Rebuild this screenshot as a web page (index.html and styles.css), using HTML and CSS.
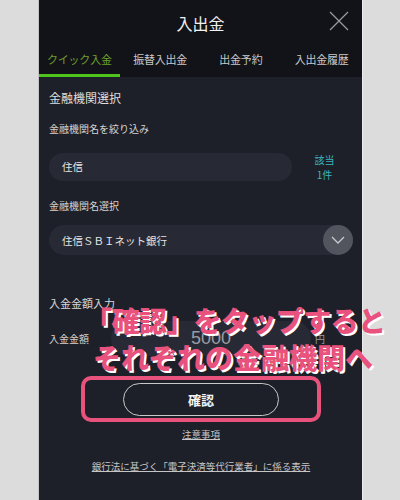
FILE: index.html
```html
<!DOCTYPE html>
<html lang="ja">

<head>
    <meta charset="UTF-8">
    <meta name="viewport" content="width=device-width, initial-scale=1.0">
    <title>入出金</title>
    <link rel="stylesheet" href="styles.css">
</head>

<body>
    <div class="phone">
        <header class="header">
            <div class="title-row">
                <h1 class="title">入出金</h1>
                <svg class="close" width="20" height="20" viewBox="0 0 20 20">
                    <path d="M1 1 L19 19 M19 1 L1 19" stroke="#9a9ca3" stroke-width="1.2" fill="none" />
                </svg>
            </div>
            <nav class="tabs">
                <div class="tab active">クイック入金</div>
                <div class="tab">振替入出金</div>
                <div class="tab">出金予約</div>
                <div class="tab">入出金履歴</div>
            </nav>
        </header>

        <main class="content">
            <h2 class="section-title">金融機関選択</h2>

            <p class="label">金融機関名を絞り込み</p>
            <div class="filter-row">
                <div class="pill filter-input">住信</div>
                <div class="hits">
                    <span>該当</span>
                    <span>1件</span>
                </div>
            </div>

            <p class="label label-select">金融機関名選択</p>
            <div class="pill select">
                <span>住信ＳＢＩネット銀行</span>
                <span class="select-btn">
                    <svg width="14" height="8" viewBox="0 0 14 8">
                        <path d="M1 1 L7 7 L13 1" stroke="#c9cad0" stroke-width="1.3" fill="none" />
                    </svg>
                </span>
            </div>

            <h3 class="amount-title">入金金額入力</h3>
            <div class="amount-row">
                <span class="amount-label">入金金額</span>
                <div class="pill amount-input">5000</div>
                <span class="yen">円</span>
            </div>

            <div class="highlight">
                <button class="confirm">確認</button>
            </div>

            <a class="link notes" href="#">注意事項</a>
            <a class="link law" href="#">銀行法に基づく「電子決済等代行業者」に係る表示</a>

            <div class="callout">
                <div class="callout-line first">「確認」をタップすると</div>
                <div class="callout-line">それぞれの金融機関へ</div>
            </div>
        </main>
    </div>
</body>

</html>
```

FILE: styles.css
```css
body {
    margin: 0;
    background-color: #dcdcdc;
    font-family: "Noto Sans CJK JP", "Noto Sans", sans-serif;
}

.phone {
    width: 323px;
    height: 500px;
    margin-left: 38px;
    background-color: #1e2029;
    border-left: 1px solid #c4c4c4;
    border-right: 1px solid #ececec;
}

.header {
    background-color: #111318;
}

.title-row {
    position: relative;
    height: 44px;
    display: flex;
    align-items: center;
    justify-content: center;
}

.title {
    margin: 2px 0 0;
    font-size: 16px;
    font-weight: normal;
    color: #f2f2f2;
}

.close {
    position: absolute;
    right: 13px;
    top: 11px;
}

.tabs {
    display: flex;
    height: 33px;
}

.tab {
    flex: 1;
    text-align: center;
    font-size: 11px;
    line-height: 31px;
    color: #c9c9c9;
    letter-spacing: -0.2px;
}

.tab.active {
    color: #6e9e2c;
    border-bottom: 3px solid #4ec41c;
}

.content {
    position: relative;
    padding: 11px 9px 0 10px;
}

.section-title {
    margin: 0;
    font-size: 12px;
    font-weight: normal;
    line-height: 20px;
    color: #dedede;
}

.label {
    margin: 12px 0 0;
    font-size: 10px;
    line-height: 18px;
    color: #d4d4d4;
}

.pill {
    background-color: #272a35;
    border-radius: 15px;
    font-size: 10.5px;
    color: #e6e6e6;
}

.filter-row {
    display: flex;
    align-items: center;
    margin-top: 14px;
}

.filter-input {
    width: 243px;
    height: 28px;
    line-height: 28px;
    padding-left: 13px;
    box-sizing: border-box;
    border-radius: 14px;
}

.hits {
    flex: 1;
    display: flex;
    flex-direction: column;
    align-items: center;
    font-size: 10px;
    line-height: 15px;
    color: #3cb5bd;
    padding-left: 4px;
}

.label-select {
    margin-top: 15px;
}

.select {
    display: flex;
    align-items: center;
    justify-content: space-between;
    height: 30px;
    margin-top: 10px;
    padding-left: 13px;
}

.select-btn {
    width: 30px;
    height: 30px;
    border-radius: 50%;
    background-color: #52545e;
    display: flex;
    align-items: center;
    justify-content: center;
}

.amount-title {
    margin: 39px 0 0;
    font-size: 11px;
    font-weight: normal;
    line-height: 18px;
    color: #d8d8d8;
}

.amount-row {
    display: flex;
    align-items: center;
    margin-top: 9px;
}

.amount-label {
    width: 62px;
    font-size: 10px;
    color: #d4d4d4;
}

.amount-input {
    width: 200px;
    height: 35px;
    line-height: 35px;
    border-radius: 18px;
    text-align: center;
    font-family: "Liberation Sans", sans-serif;
    font-size: 18px;
    color: #9a9ca3;
}

.yen {
    margin-left: 4px;
    font-size: 10px;
    color: #9a9ca3;
}

.highlight {
    width: 240px;
    height: 46px;
    margin: 20px 0 0 32px;
    box-sizing: border-box;
    border: 4px solid #e8527c;
    border-radius: 10px;
    display: flex;
    align-items: center;
    justify-content: center;
}

.confirm {
    width: 156px;
    height: 33px;
    background: none;
    border: 1px solid #c8c8c8;
    border-radius: 17px;
    color: #f4f4f4;
    font-family: inherit;
    font-size: 13px;
    font-weight: bold;
}

.link {
    display: block;
    text-align: center;
    color: #c6c6c6;
    font-size: 9.5px;
    text-decoration: underline;
}

.notes {
    margin-top: 4px;
    line-height: 16px;
}

.law {
    margin-top: 16px;
    line-height: 16px;
}

.callout {
    position: absolute;
    left: 45px;
    top: 225px;
    color: #e8527c;
    font-size: 28px;
    font-weight: 900;
    line-height: 37px;
    white-space: nowrap;
    text-shadow: 2px 2px 0 #ffffff;
}

.callout-line {
    padding-left: 9px;
}

.callout-line.first {
    padding-left: 0;
    letter-spacing: -0.6px;
}
```
